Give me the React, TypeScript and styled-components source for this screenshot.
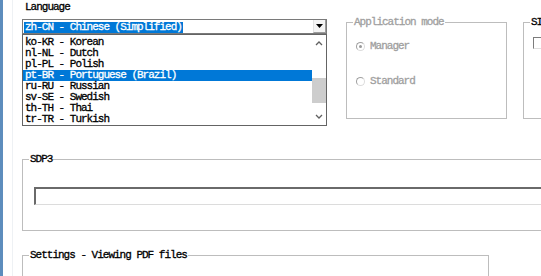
import * as React from 'react'
import styled, { createGlobalStyle } from 'styled-components'

const languages = [
	'ko-KR - Korean',
	'nl-NL - Dutch',
	'pl-PL - Polish',
	'pt-BR - Portuguese (Brazil)',
	'ru-RU - Russian',
	'sv-SE - Swedish',
	'th-TH - Thai',
	'tr-TR - Turkish'
]

const selectedItem = 'pt-BR - Portuguese (Brazil)'

const GlobalStyle = createGlobalStyle`
	html, body {
		margin: 0;
		padding: 0;
		background: #ffffff;
		overflow: hidden;
	}
	body {
		font-family: "Liberation Mono", "DejaVu Sans Mono", "Noto Sans CJK SC", monospace;
		font-size: 11px;
		letter-spacing: -1px;
		color: #000000;
		-webkit-text-stroke: 0.3px currentColor;
	}
`

const Chevron = ({ up }: { up?: boolean }) => (
	<svg width="8" height="5" viewBox="0 0 8 5">
		<polyline
			points={up ? '1,4 4,1 7,4' : '1,1 4,4 7,1'}
			fill="none"
			stroke="#606060"
			strokeWidth="1.3"
		/>
	</svg>
)

export default function App() {
	return (
		<Screen>
			<GlobalStyle />
			<Stripe />
			<Panel>
				<Content>
					<TopRow>
						<LanguageColumn>
							<FieldLabel>Language</FieldLabel>
							<Combo>
								<ComboValue>
									<Selected>zh-CN - Chinese (Simplified)</Selected>
								</ComboValue>
								<DropButton>
									<svg width="7" height="4" viewBox="0 0 7 4">
										<polygon points="0,0 7,0 3.5,4" fill="#000" />
									</svg>
								</DropButton>
							</Combo>
							<ListBox>
								<Items>
									{languages.map(l => (
										<Item key={l} active={l === selectedItem}>{l}</Item>
									))}
								</Items>
								<ScrollBar>
									<ScrollButton><Chevron up /></ScrollButton>
									<Track>
										<Thumb />
									</Track>
									<ScrollButton><Chevron /></ScrollButton>
								</ScrollBar>
							</ListBox>
						</LanguageColumn>

						<ModeGroup>
							<Legend muted>Application mode</Legend>
							<RadioList>
								<RadioRow>
									<Radio checked />
									<Muted>Manager</Muted>
								</RadioRow>
								<RadioRow>
									<Radio />
									<Muted>Standard</Muted>
								</RadioRow>
							</RadioList>
						</ModeGroup>

						<SideGroup>
							<Legend>SI</Legend>
							<SideBody>
								<CheckBox />
							</SideBody>
						</SideGroup>
					</TopRow>

					<SdpGroup>
						<Legend>SDP3</Legend>
						<SdpBody>
							<TextInput />
						</SdpBody>
					</SdpGroup>

					<PdfGroup>
						<Legend>Settings - Viewing PDF files</Legend>
					</PdfGroup>
				</Content>
			</Panel>
		</Screen>
	)
}

const Screen = styled.div`
	display: flex;
	width: 541px;
	height: 276px;
	overflow: hidden;
	background: #ffffff;
`

const Stripe = styled.div`
	flex: 0 0 3px;
	background: #5d8dbd;
`

const Panel = styled.div`
	flex: 1;
	display: flex;
	padding-left: 9px;
	min-width: 0;
`

const Content = styled.div`
	flex: 1;
	display: flex;
	flex-direction: column;
	border-left: 1px solid #eef1f4;
	padding: 2px 0 0 9px;
	min-width: 0;

	& > * {
		flex-shrink: 0;
	}
`

const TopRow = styled.div`
	display: flex;
	align-items: flex-start;
`

const LanguageColumn = styled.div`
	flex: 0 0 305px;
	display: flex;
	flex-direction: column;
`

const FieldLabel = styled.div`
	line-height: 11px;
	padding-left: 3px;
	margin-bottom: 6px;
`

const Combo = styled.div`
	display: flex;
	height: 13px;
	border: 1px solid #7a7a7a;
	background: #ffffff;
`

const ComboValue = styled.div`
	flex: 1;
	padding: 1px 0 0 1px;
`

const Selected = styled.span`
	display: inline-block;
	line-height: 11px;
	padding: 0 1px;
	background: #0078d7;
	color: #ffffff;
`

const DropButton = styled.div`
	flex: 0 0 13px;
	display: flex;
	align-items: center;
	justify-content: center;
	border-left: 1px solid #e2e2e2;
	border-right: 1px solid #9c9c9c;
	border-bottom: 1px solid #9c9c9c;
	box-sizing: border-box;
	background: #f4f4f4;
`

const ListBox = styled.div`
	display: flex;
	height: 90px;
	border: 1px solid #646464;
	background: #ffffff;
`

const Items = styled.div`
	flex: 1;
	padding-top: 2px;
`

const Item = styled.div<{ active?: boolean }>`
	line-height: 11px;
	height: 11px;
	padding-left: 2px;
	white-space: nowrap;
	background: ${p => (p.active ? '#0078d7' : 'transparent')};
	color: ${p => (p.active ? '#ffffff' : '#000000')};
`

const ScrollBar = styled.div`
	flex: 0 0 14px;
	display: flex;
	flex-direction: column;
	background: #ffffff;
`

const ScrollButton = styled.div`
	flex: 0 0 17px;
	display: flex;
	align-items: center;
	justify-content: center;
`

const Track = styled.div`
	flex: 1;
	padding-top: 26px;
`

const Thumb = styled.div`
	height: 25px;
	background: #cdcdcd;
`

const Group = styled.fieldset`
	margin: 0;
	padding: 0;
	min-width: 0;
	border: 1px solid #bdbdbd;
	box-sizing: border-box;
`

const Legend = styled.legend<{ muted?: boolean }>`
	margin-left: 6px;
	padding: 0 1px;
	line-height: 11px;
	white-space: nowrap;
	color: ${p => (p.muted ? '#a0a0a0' : '#000000')};
`

const ModeGroup = styled(Group)`
	flex: 0 0 161px;
	height: 102px;
	margin-top: 15px;
	margin-left: 19px;
`

const RadioList = styled.div`
	display: flex;
	flex-direction: column;
	gap: 24px;
	padding: 13px 0 0 9px;
`

const RadioRow = styled.div`
	display: flex;
	align-items: center;
	gap: 5px;
	height: 11px;
`

const Radio = styled.span<{ checked?: boolean }>`
	position: relative;
	display: inline-block;
	width: 7px;
	height: 7px;
	border-radius: 50%;
	border: 1px solid #a0a0a0;
	border-right-color: #dcdcdc;
	border-bottom-color: #dcdcdc;
	background: #ffffff;

	&::after {
		content: '';
		display: ${p => (p.checked ? 'block' : 'none')};
		position: absolute;
		left: 2px;
		top: 2px;
		width: 3px;
		height: 3px;
		border-radius: 50%;
		background: #9a9a9a;
	}
`

const Muted = styled.span`
	color: #a0a0a0;
	line-height: 11px;
`

const SideGroup = styled(Group)`
	flex: 0 0 200px;
	height: 102px;
	margin-top: 15px;
	margin-left: 16px;
`

const SideBody = styled.div`
	padding: 9px 0 0 9px;
`

const CheckBox = styled.div`
	width: 10px;
	height: 10px;
	border-top: 1px solid #7c7c7c;
	border-left: 1px solid #7c7c7c;
	border-right: 1px solid #e0e0e0;
	border-bottom: 1px solid #e0e0e0;
	background: #ffffff;
`

const SdpGroup = styled(Group)`
	width: 560px;
	height: 77px;
	margin-top: 28px;
`

const SdpBody = styled.div`
	padding: 22px 0 0 11px;
`

const TextInput = styled.div`
	width: 560px;
	height: 15px;
	border-top: 2px solid #6a6a6a;
	border-left: 2px solid #6a6a6a;
	border-right: 1px solid #dcdcdc;
	border-bottom: 1px solid #dcdcdc;
	background: #ffffff;
`

const PdfGroup = styled(Group)`
	width: 467px;
	height: 60px;
	margin-top: 19px;
`
